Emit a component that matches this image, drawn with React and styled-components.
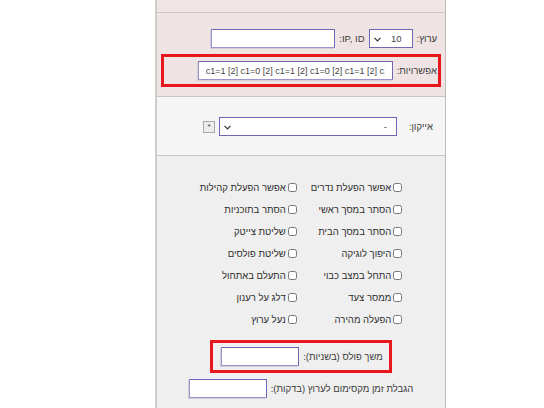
import React from "react";
import styled, { createGlobalStyle } from "styled-components";

const GlobalStyle = createGlobalStyle`
  html, body {
    margin: 0;
    padding: 0;
    background: #ffffff;
  }
  body {
    font-family: "Liberation Sans", Arial, sans-serif;
    font-size: 9.5px;
    color: #333;
  }
`;

const Page = styled.div`
  height: 408px;
  overflow: hidden;
`;

const Panel = styled.div`
  direction: rtl;
  margin-left: 155px;
  width: 288px;
  min-height: 408px;
  border-left: 2px solid #d0cccc;
  border-right: 1px solid #bcbcbc;
  background: #efefef;
`;

const Section = styled.div`
  background: ${props => props.bg};
  border-top: ${props => (props.first ? "none" : "1px solid #c9c6c6")};
  padding: ${props => props.pad};
  text-align: ${props => props.align || "right"};
`;

const Row = styled.div`
  display: flex;
  align-items: center;
  gap: ${props => props.gap || 4}px;
  margin-right: ${props => props.mr || 0}px;
  height: 19px;
`;

const Label = styled.label`
  color: #3a3a3a;
  white-space: nowrap;
  min-width: ${props => props.minw || 0}px;
`;

const TextInput = styled.input`
  box-sizing: border-box;
  width: ${props => props.w}px;
  height: ${props => props.h || 19}px;
  border: 1px solid #7166b6;
  border-left-color: #9c94cc;
  border-bottom-color: #9c94cc;
  box-shadow: -1px 1px 0 #cfcfd8;
  background: #fff;
  padding: 0 7px;
  font-family: "Liberation Sans", Arial, sans-serif;
  font-size: 9px;
  color: #444;
  outline: none;
`;

const SelectWrap = styled.div`
  position: relative;
  width: ${props => props.w}px;
  height: 19px;
`;

const NativeSelect = styled.select`
  appearance: none;
  box-sizing: border-box;
  width: 100%;
  height: 100%;
  border: 1px solid #7166b6;
  background: #fff;
  padding: 0 ${props => props.pr}px 0 18px;
  font-family: "Liberation Sans", Arial, sans-serif;
  font-size: 9.5px;
  color: #444;
  outline: none;
`;

const Chevron = styled.svg`
  position: absolute;
  left: 5px;
  top: 8px;
  pointer-events: none;
`;

const TinyButton = styled.button`
  box-sizing: border-box;
  width: 12px;
  height: 12px;
  padding: 0;
  border: 1px solid #a9a9a9;
  background: #ececec;
  font-size: 8px;
  line-height: 8px;
  color: #444;
`;

const Highlight = styled.div`
  box-sizing: border-box;
  display: ${props => (props.inline ? "inline-flex" : "flex")};
  border: 3px solid #e8161d;
  padding: ${props => props.pad};
  margin-top: ${props => props.mt || 0}px;
`;

const CheckGrid = styled.div`
  display: inline-grid;
  grid-template-columns: auto auto;
  grid-auto-rows: 22px;
  column-gap: 14px;
  text-align: right;
`;

const CheckItem = styled.label`
  display: flex;
  align-items: center;
  gap: 1px;
  color: #2e2e2e;
  white-space: nowrap;
  font-size: 9.5px;
`;

const Box = styled.input`
  width: 9px;
  height: 9px;
  margin: 0 0 0 1px;
`;

const FieldRow = styled.div`
  display: inline-flex;
  align-items: center;
  gap: 4px;
  margin-top: ${props => props.mt || 0}px;
`;

const ChevronIcon = () => (
  <Chevron width="7" height="5" viewBox="0 0 7 5">
    <path d="M0.5 0.8 L3.5 3.8 L6.5 0.8" fill="none" stroke="#333" strokeWidth="1.2" />
  </Chevron>
);

const rightCol = [
  "אפשר הפעלת נדרים",
  "הסתר במסך ראשי",
  "הסתר במסך הבית",
  "היפוך לוגיקה",
  "התחל במצב כבוי",
  "ממסר צעד",
  "הפעלה מהירה"
];

const leftCol = [
  "אפשר הפעלת קהילות",
  "הסתר בתוכניות",
  "שליטת צייטק",
  "שליטת פולסים",
  "התעלם באתחול",
  "דלג על רענון",
  "נעל ערוץ"
];

export default function App() {
  const cells = [];
  rightCol.forEach((r, i) => {
    cells.push(r, leftCol[i]);
  });

  return (
    <Page>
      <GlobalStyle />
      <Panel>
        <Section first bg="#f0e4e4" pad="0" style={{ height: 12 }} />

        <Section bg="#efe3e3" pad="16px 4px 9px 4px">
          <Row mr={4}>
            <Label>ערוץ:</Label>
            <SelectWrap w={44}>
              <NativeSelect pr={10} defaultValue="10">
                <option value="10">10</option>
              </NativeSelect>
              <ChevronIcon />
            </SelectWrap>
            <Label dir="ltr">:IP, ID</Label>
            <TextInput w={124} />
          </Row>
          <Highlight mt={6} pad="4px 1px 4px 3px">
            <Row>
              <Label>אפשרויות:</Label>
              <TextInput
                w={195}
                dir="ltr"
                defaultValue="c1=1 [2] c1=0 [2] c1=1 [2] c1=0 [2] c1=1 [2] c1=0 [2]"
              />
            </Row>
          </Highlight>
        </Section>

        <Section bg="#f5f5f5" pad="20px 12px 19px 12px">
          <Row>
            <Label minw={32}>אייקון:</Label>
            <SelectWrap w={178}>
              <NativeSelect pr={9} defaultValue="-">
                <option value="-">-</option>
              </NativeSelect>
              <ChevronIcon />
            </SelectWrap>
            <TinyButton type="button">*</TinyButton>
          </Row>
        </Section>

        <Section bg="#efefef" pad="20px 0 20px 0" align="center">
          <CheckGrid>
            {cells.map(text => (
              <CheckItem key={text}>
                <Box type="checkbox" />
                {text}
              </CheckItem>
            ))}
          </CheckGrid>
          <div>
            <Highlight inline mt={10} pad="4px 6px 4px 8px">
              <FieldRow>
                <Label>משך פולס (בשניות):</Label>
                <TextInput w={78} />
              </FieldRow>
            </Highlight>
          </div>
          <div>
            <FieldRow mt={6}>
              <Label>הגבלת זמן מקסימום לערוץ (בדקות):</Label>
              <TextInput w={78} />
            </FieldRow>
          </div>
        </Section>
      </Panel>
    </Page>
  );
}
